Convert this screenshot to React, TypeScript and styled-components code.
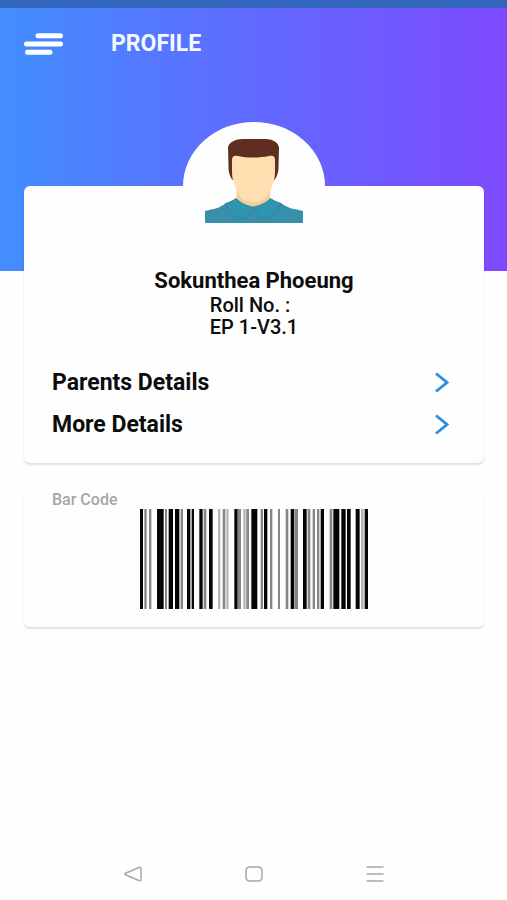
import React from "react";
import styled, { createGlobalStyle } from "styled-components";

const GlobalStyle = createGlobalStyle`
  * { box-sizing: border-box; }
  html, body, #root { height: 100%; }
  body {
    margin: 0;
    background: #fefefe;
    color: #0c0c0c;
    font-family: Roboto, "Liberation Sans", sans-serif;
  }
  button { font: inherit; color: inherit; border: 0; padding: 0; background: none; cursor: pointer; }
  svg { display: block; }
`;

const Screen = styled.div`
  min-height: 100%;
  display: flex;
  flex-direction: column;
`;

const StatusBar = styled.div`
  height: 8px;
  background: #3267bd;
`;

const Hero = styled.header`
  height: 263px;
  padding: 24px 24px 0;
  background: linear-gradient(90deg, #428eff 0%, #5f6bff 48%, #7e4aff 100%);
`;

const TitleRow = styled.div`
  display: flex;
  align-items: center;
  gap: 48px;
  height: 24px;
`;

const Title = styled.h1`
  margin: 0;
  color: #f4f8ff;
  font-size: 23px;
  line-height: 24px;
  font-weight: 700;
`;

const Content = styled.main`
  flex: 1;
  display: flex;
  flex-direction: column;
  gap: 28px;
  margin-top: -85px;
  padding: 0 23px 0 24px;
`;

const Card = styled.section`
  border-radius: 6px;
  background: #fefefe;
  box-shadow: 0 2px 2px rgba(0, 0, 0, 0.12), 0 0 1px rgba(0, 0, 0, 0.06);
`;

const ProfileCard = styled(Card)`
  display: flex;
  flex-direction: column;
  align-items: center;
  padding-bottom: 17px;
`;

const Avatar = styled.div`
  display: flex;
  justify-content: center;
  width: 142px;
  height: 128px;
  margin-top: -64px;
  padding-top: 16px;
  border-radius: 50%;
  background: #fefefe;
`;

const Name = styled.h2`
  margin: 18px 0 0;
  font-size: 22px;
  line-height: 26px;
  font-weight: 700;
`;

const Roll = styled.p`
  margin: 0;
  font-size: 20px;
  line-height: 22px;
  font-weight: 500;
`;

const Links = styled.nav`
  align-self: stretch;
  margin-top: 24px;
`;

const LinkRow = styled.button`
  display: flex;
  align-items: center;
  justify-content: space-between;
  width: 100%;
  height: 42px;
  padding: 0 35px 0 28px;
  font-size: 23px;
  line-height: 28px;
  font-weight: 700;
`;

const CodeCard = styled(Card)`
  display: flex;
  flex-direction: column;
  padding-bottom: 18px;
  box-shadow: 0 2px 2px rgba(0, 0, 0, 0.12);
`;

const CodeLabel = styled.h3`
  margin: 0 28px;
  color: #a6a6a6;
  font-size: 16px;
  line-height: 18px;
  font-weight: 500;
`;

const CodeImage = styled.svg`
  align-self: center;
  width: 228px;
  height: 100px;
`;

const SystemBar = styled.nav`
  display: flex;
  justify-content: center;
  gap: 97px;
  padding-bottom: 14px;
`;

const SystemButton = styled.button`
  width: 24px;
  height: 24px;
`;

const tones = { k: "#050505", g: "#858585", l: "#b5b5b5" };
type Bar = [x: number, width: number, tone: keyof typeof tones];

const bars: Bar[] = [
  [0, 9, "k"], [13, 7, "g"], [27, 7, "g"], [51, 20, "k"], [75, 6, "g"],
  [86, 13, "k"], [105, 13, "k"], [122, 7, "g"], [141, 10, "k"], [155, 7, "k"],
  [178, 10, "k"], [191, 8, "g"], [207, 11, "k"], [234, 7, "l"], [248, 8, "g"],
  [259, 7, "l"], [283, 10, "k"], [294, 9, "g"], [310, 7, "l"], [319, 8, "g"],
  [334, 18, "k"], [362, 7, "g"], [372, 10, "k"], [390, 7, "g"], [414, 6, "g"],
  [437, 8, "g"], [452, 11, "k"], [465, 9, "g"], [489, 11, "k"], [503, 8, "g"],
  [518, 7, "g"], [531, 7, "g"], [542, 10, "k"], [569, 8, "g"], [580, 18, "k"],
  [604, 13, "k"], [621, 11, "k"], [647, 12, "k"], [663, 8, "l"], [674, 10, "k"],
];

const MenuIcon = () => (
  <svg width="39" height="24" viewBox="0 0 39 24" stroke="#fff" strokeWidth="5" strokeLinecap="round" aria-hidden="true">
    <path d="M14 3.700h22.500M2.500 12.100h34M3.500 20.300h22.500" />
  </svg>
);

const Person = () => (
  <svg width="100" height="86" viewBox="0 0 100 86" aria-hidden="true">
    <path d="M32.500 50h33.500v12L50 74 32.500 62z" fill="#f1cf9b" />
    <path d="M28.500 42C25 37 24.500 33 24.500 28L24 10C24 4 33 1 38 1h24c5 0 13 3 13 9l-.5 18c0 5-.5 9-4 14z" fill="#602d22" />
    <path d="M28 22c0-4 2-4.500 6-4 10 2 21 2 31 0 4-.5 6 0 6 4v12C71 44 67 51 63 58c-3 5-8 6-13.500 6S39 63 36 58C32 51 28 44 28 34z" fill="#ffdeb0" />
    <path d="M1 85V73c9-2 15-3 21-8l11-4c4 4 10 7 16.500 8 6.500-1 12.500-4 16.500-8l11 4c6 5 13 6 22 8v12z" fill="#388fa9" />
    <path d="M32 60.500c5 5 10 7 17 8.500-2 5-5 9-8 11-4 1.500-9-1-12-4-3-3-5-6-8-10 4-1 7-3 11-5.500z" fill="#2f94b2" stroke="#2b839c" strokeWidth=".8" />
    <path d="M66.500 60.500c-5 5-10 7-17 8.500 2 5 4 9 7 11 5 1.500 9-1 13-4 3-3 5-6 8-10-4-1-7-3-11-5.500z" fill="#2f94b2" stroke="#2b839c" strokeWidth=".8" />
  </svg>
);

const Chevron = () => (
  <svg width="14" height="22" viewBox="0 0 14 22" fill="none" stroke="#2d8de3" strokeWidth="2.800" aria-hidden="true">
    <path d="M1 1.500l11 9L1 19.500" />
  </svg>
);

const systemItems = [
  { label: "Back", path: "M4.500 11.300L18 5.500q2-.8 2 1v11q0 1.800-2 1L4.500 12.700q-1.500-.7 0-1.400z" },
  { label: "Home", path: "M8 5h8q4 0 4 4v6q0 4-4 4H8q-4 0-4-4V9q0-4 4-4z" },
  { label: "Recent apps", path: "M3.500 5h17M3.500 12h17M3.500 19h17" },
];

export default function App() {
  return (
    <>
      <GlobalStyle />
      <Screen>
        <StatusBar />
        <Hero>
          <TitleRow>
            <button type="button" aria-label="Menu"><MenuIcon /></button>
            <Title>PROFILE</Title>
          </TitleRow>
        </Hero>
        <Content>
          <ProfileCard>
            <Avatar><Person /></Avatar>
            <Name>Sokunthea Phoeung</Name>
            <Roll>Roll No. :<br />EP 1-V3.1</Roll>
            <Links aria-label="Profile details">
              {["Parents Details", "More Details"].map((label) => (
                <LinkRow type="button" key={label}>{label}<Chevron /></LinkRow>
              ))}
            </Links>
          </ProfileCard>
          <CodeCard>
            <CodeLabel>Bar Code</CodeLabel>
            <CodeImage viewBox="0 0 684 300" preserveAspectRatio="none" role="img" aria-label="Bar code">
              {bars.map(([x, width, tone]) => (
                <rect key={x} x={x} width={width} height="300" fill={tones[tone]} />
              ))}
            </CodeImage>
          </CodeCard>
        </Content>
        <SystemBar aria-label="System">
          {systemItems.map(({ label, path }) => (
            <SystemButton type="button" key={label} aria-label={label}>
              <svg width="24" height="24" viewBox="0 0 24 24" fill="none" stroke="#a8a8a8" strokeWidth="1.500" aria-hidden="true">
                <path d={path} />
              </svg>
            </SystemButton>
          ))}
        </SystemBar>
      </Screen>
    </>
  );
}
